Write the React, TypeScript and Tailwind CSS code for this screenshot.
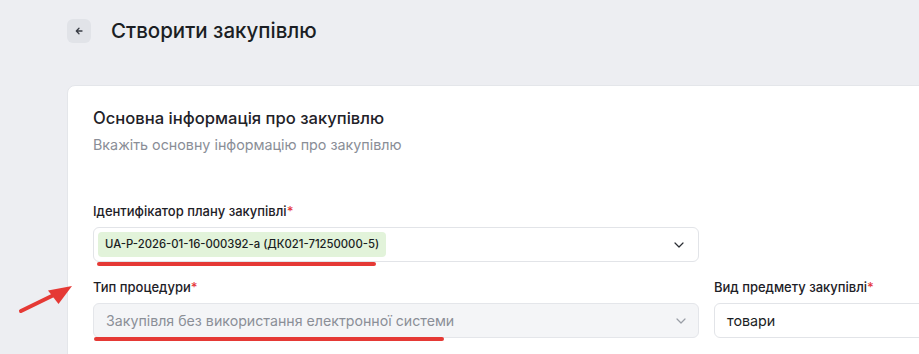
import React from "react";

const Chevron = ({ className }: { className?: string }) => (
  <svg width="10" height="6" viewBox="0 0 10 6" fill="none" className={className}>
    <path d="M1 1l4 4 4-4" stroke="currentColor" strokeWidth="1.2" strokeLinecap="round" strokeLinejoin="round" />
  </svg>
);

const Label = ({ children }: { children: React.ReactNode }) => (
  <div className="text-[13px] leading-5 font-medium text-[#1d2026]">
    {children}
    <span className="text-[#e5383b]">*</span>
  </div>
);

const App: React.FC = () => {
  return (
    <div
      className="relative h-[354px] w-[919px] overflow-hidden bg-[#edeef2] pl-[67px] pt-[19px]"
      style={{ fontFamily: "Inter, 'Noto Sans', sans-serif" }}
    >
      <header className="flex items-center gap-5">
        <button className="flex h-6 w-6 items-center justify-center rounded-md bg-[#e1e3e8] text-[#3a3e46]">
          <svg width="8" height="8" viewBox="0 0 8 8" fill="none">
            <path d="M7 4H1.5M4 1.3L1.3 4 4 6.7" stroke="currentColor" strokeWidth="1.3" strokeLinecap="round" strokeLinejoin="round" />
          </svg>
        </button>
        <h1 className="text-[20.5px] leading-6 font-medium text-[#1b1e24]">Створити закупівлю</h1>
      </header>

      <section className="mt-[42px] w-[900px] rounded-tl-lg border border-[#e4e6ea] bg-white pb-10 pl-[25px] pt-[20px]">
        <h2 className="text-[16.6px] leading-6 font-medium text-[#1f2228]">Основна інформація про закупівлю</h2>
        <p className="mt-[5px] text-[14.3px] leading-5 text-[#8a8e97]">Вкажіть основну інформацію про закупівлю</p>

        <div className="mt-[46px] w-[606px]">
          <Label>Ідентифікатор плану закупівлі</Label>
          <div className="relative mt-[6px] flex h-[35px] items-center justify-between rounded-md border border-[#e2e4e8] bg-white pl-[4px] pr-[14px]">
            <span className="rounded bg-[#e2f3da] px-[7px] py-[4px] text-[11.3px] leading-[17px] font-medium text-[#1a1d22]">
              UA-P-2026-01-16-000392-a (ДК021-71250000-5)
            </span>
            <Chevron className="text-[#2b2e34]" />
            <div className="absolute left-[3px] top-[34px] h-1 w-[279px] rounded-full bg-[#e53935]" />
          </div>
        </div>

        <div className="mt-[15px] flex gap-[15px]">
          <div className="w-[606px] shrink-0">
            <Label>Тип процедури</Label>
            <div className="relative mt-[6px] flex h-[35px] items-center justify-between rounded-md border border-[#e4e6ea] bg-[#f4f5f7] pl-[12px] pr-[12px]">
              <span className="text-[14.2px] text-[#8b8f97]">Закупівля без використання електронної системи</span>
              <Chevron className="text-[#9a9ea6]" />
              <div className="absolute left-0 top-[33px] h-1 w-[350px] rounded-full bg-[#e53935]" />
            </div>
          </div>
          <div className="w-[300px] shrink-0">
            <Label>Вид предмету закупівлі</Label>
            <div className="mt-[6px] flex h-[35px] items-center rounded-l-md border border-[#e2e4e8] bg-white pl-[12px]">
              <span className="text-[14.3px] text-[#1b1e24]">товари</span>
            </div>
          </div>
        </div>
      </section>

      <svg className="absolute left-[14px] top-[282px]" width="64" height="36" viewBox="0 0 64 36" fill="none">
        <path d="M7 29L46 10" stroke="#e53935" strokeWidth="4" strokeLinecap="round" />
        <path d="M58 4L34 8.5L44.5 22Z" fill="#e53935" />
      </svg>
    </div>
  );
};

export default App;
